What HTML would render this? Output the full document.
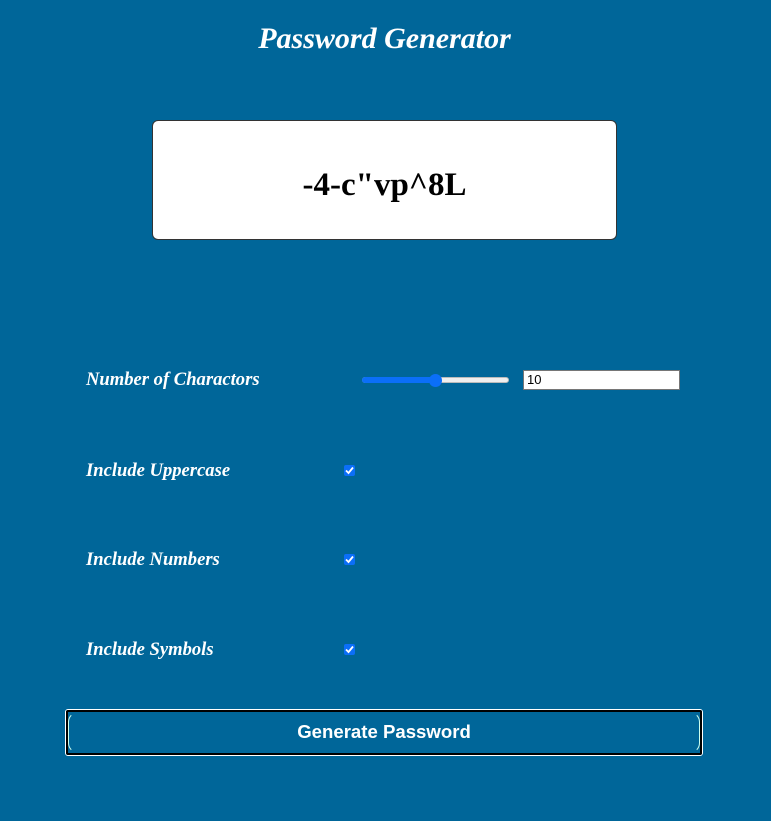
<!DOCTYPE html>
<html><head><style>
html,body{margin:0;padding:0;}
body{width:771px;height:821px;background:#006699;position:relative;overflow:hidden;font-family:"Liberation Serif",serif;}
.t{position:absolute;left:-1px;width:771px;top:19px;text-align:center;color:#fff;font-style:italic;font-weight:bold;font-size:30px;line-height:40px;}
.box{position:absolute;left:152px;top:120px;width:463px;height:118px;background:#fff;border:1px solid #333;border-radius:6px;text-align:center;font-weight:bold;font-size:33px;line-height:128px;color:#000;}
.l{position:absolute;left:86px;color:#fff;font-style:italic;font-weight:bold;font-size:18.6px;line-height:20px;}
.cb{position:absolute;left:344px;width:11px;height:11px;background:#0b6ff8;border-radius:2px;}
.cb svg{position:absolute;left:0;top:0;}
.track{position:absolute;left:362px;top:377px;width:147px;height:6px;border-radius:3px;background:#efefef;border:1px solid #bbb;box-sizing:border-box;}
.fill{position:absolute;left:362px;top:377px;width:74px;height:6px;border-radius:3px;background:#0b6ff8;}
.thumb{position:absolute;left:429px;top:374px;width:13px;height:13px;border-radius:50%;background:#0b6ff8;}
.num{position:absolute;left:523px;top:370px;width:157px;height:20px;box-sizing:border-box;background:#fff;border:1px solid #767676;font-family:"Liberation Sans",sans-serif;font-size:13px;line-height:18px;padding-left:3px;color:#000;}
.btn{position:absolute;left:65px;top:709px;width:638px;height:47px;box-sizing:border-box;border:1px solid #fff;border-radius:3px;}
.btn .in{position:absolute;left:0;top:0;right:0;bottom:0;border:2px solid #000;border-radius:2px;}
.btn .in2{position:absolute;left:2px;top:2px;right:2px;bottom:2px;border:1px solid #cfe;border-radius:10px;border-top-color:transparent;border-bottom-color:transparent;}
.btn span{position:absolute;left:0;right:0;top:0;text-align:center;line-height:43px;color:#fff;font-family:"Liberation Sans",sans-serif;font-weight:bold;font-size:18.6px;}
</style></head><body>
<div class="t">Password Generator</div>
<div class="box">-4-c"vp^8L</div>
<div class="l" style="top:370px">Number of Charactors</div>
<div class="track"></div><div class="fill"></div><div class="thumb"></div>
<div class="num">10</div>
<div class="l" style="top:461px">Include Uppercase</div>
<div class="cb" style="top:465px"><svg width="11" height="11" viewBox="0 0 11 11"><path d="M2 5.5L4.5 8L9 2.5" stroke="#fff" stroke-width="1.8" fill="none"/></svg></div>
<div class="l" style="top:550px">Include Numbers</div>
<div class="cb" style="top:554px"><svg width="11" height="11" viewBox="0 0 11 11"><path d="M2 5.5L4.5 8L9 2.5" stroke="#fff" stroke-width="1.8" fill="none"/></svg></div>
<div class="l" style="top:640px">Include Symbols</div>
<div class="cb" style="top:644px"><svg width="11" height="11" viewBox="0 0 11 11"><path d="M2 5.5L4.5 8L9 2.5" stroke="#fff" stroke-width="1.8" fill="none"/></svg></div>
<div class="btn"><div class="in"></div><div class="in2"></div><span>Generate Password</span></div>
</body></html>
